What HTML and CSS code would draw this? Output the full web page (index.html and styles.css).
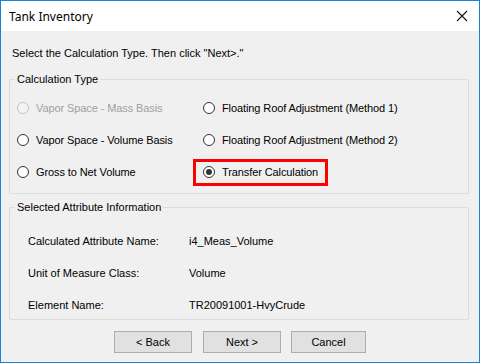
FILE: index.html
```html
<!DOCTYPE html>
<html lang="en">

<head>
    <meta charset="UTF-8">
    <title>Tank Inventory</title>
    <link rel="stylesheet" href="styles.css">
</head>

<body>
    <div class="window">
        <div class="titlebar">
            <span class="title">Tank Inventory</span>
            <svg class="close" width="12" height="12" viewBox="0 0 12 12">
                <path d="M1 1 L11 11 M11 1 L1 11" stroke="#111" stroke-width="1.1" fill="none" />
            </svg>
        </div>

        <div class="content">
            <p class="intro">Select the Calculation Type. Then click "Next&gt;."</p>

            <!-- Calculation type choices -->
            <fieldset class="group calc-type">
                <legend>Calculation Type</legend>
                <div class="options">
                    <label class="option disabled"><span class="radio"></span>Vapor Space - Mass Basis</label>
                    <label class="option"><span class="radio"></span>Floating Roof Adjustment (Method 1)</label>
                    <label class="option"><span class="radio"></span>Vapor Space - Volume Basis</label>
                    <label class="option"><span class="radio"></span>Floating Roof Adjustment (Method 2)</label>
                    <label class="option"><span class="radio"></span>Gross to Net Volume</label>
                    <label class="option selected"><span class="radio checked"></span>Transfer Calculation</label>
                </div>
            </fieldset>

            <!-- Attribute info -->
            <fieldset class="group attr-info">
                <legend>Selected Attribute Information</legend>
                <div class="info">
                    <span>Calculated Attribute Name:</span><span>i4_Meas_Volume</span>
                    <span>Unit of Measure Class:</span><span>Volume</span>
                    <span>Element Name:</span><span>TR20091001-HvyCrude</span>
                </div>
            </fieldset>

            <div class="buttons">
                <button class="btn">&lt; Back</button>
                <button class="btn">Next &gt;</button>
                <button class="btn cancel">Cancel</button>
            </div>
        </div>
    </div>
</body>

</html>
```

FILE: styles.css
```css
/* Window frame */
body {
    margin: 0;
    padding: 0;
    font-family: "Liberation Sans", Arial, sans-serif;
    font-size: 11px;
    color: #000;
}

.window {
    width: 480px;
    height: 363px;
    box-sizing: border-box;
    border: 1px solid #1883d7;
    background-color: #f0f0f0;
}

.titlebar {
    height: 30px;
    background-color: #fff;
    display: flex;
    align-items: center;
    justify-content: space-between;
    padding: 0 11px 0 8px;
}

.title {
    font-family: "Noto Sans", "Open Sans", sans-serif;
    font-size: 12px;
    color: #000;
}

.content {
    padding: 16px 10px 0 8px;
}

.intro {
    margin: 0 0 13px 3px;
    line-height: 13px;
}

/* Group boxes */
.group {
    margin: 0;
    padding: 0;
    border: 1px solid #dcdcdc;
    border-radius: 2px;
    min-width: 0;
}

.group legend {
    margin-left: 5px;
    padding: 0 2px;
    line-height: 13px;
}

.options {
    display: grid;
    grid-template-columns: 186px 1fr;
    grid-auto-rows: 32px;
    padding: 6px 0 5px 0;
    letter-spacing: -0.1px;
}

.option {
    display: flex;
    align-items: center;
    gap: 7px;
    padding-left: 7px;
    align-self: center;
    height: 21px;
}

.option.disabled {
    color: #a0a0a0;
}

.option.selected {
    width: 122px;
    outline: 3px solid #f00;
    outline-offset: 0;
}

.radio {
    width: 10px;
    height: 10px;
    border: 1px solid #333;
    border-radius: 50%;
    background-color: #fff;
    position: relative;
    flex-shrink: 0;
}

.disabled .radio {
    border-color: #c4c4c4;
    background-color: #f4f4f4;
}

.radio.checked::after {
    content: "";
    position: absolute;
    left: 2px;
    top: 2px;
    width: 6px;
    height: 6px;
    border-radius: 50%;
    background-color: #333;
}

.attr-info {
    margin-top: 7px;
}

.info {
    display: grid;
    grid-template-columns: 161px 1fr;
    grid-auto-rows: 32px;
    align-items: center;
    padding: 11px 0 0 18px;
    height: 105px;
    box-sizing: border-box;
}

/* Buttons */
.buttons {
    display: flex;
    justify-content: center;
    gap: 11px;
    margin-top: 11px;
    padding-left: 2px;
}

.btn {
    width: 78px;
    height: 22px;
    font-family: "Liberation Sans", Arial, sans-serif;
    font-size: 11px;
    color: #000;
    background-color: #e1e1e1;
    border: 1px solid #adadad;
    border-radius: 0;
    padding: 0;
}

.btn.cancel {
    width: 75px;
    margin-left: -1px;
}
```
